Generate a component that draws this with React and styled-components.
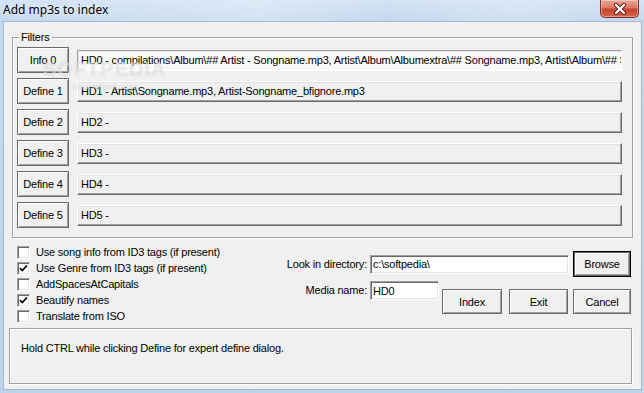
import React from 'react';
import styled, { createGlobalStyle } from 'styled-components';

const GlobalStyle = createGlobalStyle`
  html, body { margin:0; padding:0; background:#c4d8ee; }
  body { font-family:"Liberation Sans", Arial, sans-serif; font-size:11px; letter-spacing:-0.2px; color:#000; }
  * { box-sizing:border-box; }
`;

const Window = styled.div`
  position:relative;
  width:644px;
  height:393px;
  display:flex;
  flex-direction:column;
  padding:0 2px 3px 3px;
  background:linear-gradient(to bottom, #d3e3f4 0px, #c4d8ee 21px, #bdd3ec 100%);
  overflow:hidden;
`;

const TitleBar = styled.div`
  height:21px;
  flex:none;
  display:flex;
  align-items:center;
  justify-content:space-between;
  padding-right:3px;
  background:linear-gradient(100deg, rgba(255,255,255,0.0) 0%, rgba(255,255,255,0.25) 40%, rgba(255,255,255,0) 60%, rgba(255,255,255,0.2) 80%, rgba(255,255,255,0) 100%);
`;

const Title = styled.span`
  font-family:"Noto Sans", "Open Sans", sans-serif;
  font-size:12px;
  letter-spacing:0;
  color:#000;
  margin-bottom:2px;
  text-shadow:0 0 6px rgba(255,255,255,0.9);
`;

const CloseButton = styled.div`
  align-self:flex-start;
  width:39px;
  height:18px;
  border:1px solid #7a3024;
  border-top:none;
  border-radius:0 0 5px 5px;
  background:linear-gradient(to bottom, #e9a596 0%, #d97a66 45%, #c5432d 55%, #d5664f 100%);
  box-shadow:inset 0 0 0 1px rgba(255,255,255,0.35);
  display:flex;
  align-items:center;
  justify-content:center;
`;

const Client = styled.div`
  flex:1;
  display:flex;
  flex-direction:column;
  background:#f0f0f0;
  border:1px solid #a9b9cb;
  padding:9px 8px 5px 8px;
`;

const GroupBox = styled.fieldset`
  margin:0;
  padding:3px 10px 9px 4px;
  min-width:0;
  border:1px solid #a0a0a0;
  box-shadow:inset 1px 1px 0 #fff, 1px 1px 0 #fff;
`;

const Legend = styled.legend`
  padding:0 2px;
  margin-left:2px;
  line-height:13px;
  background:#f0f0f0;
`;

const Rows = styled.div`
  display:flex;
  flex-direction:column;
  gap:5px;
`;

const FilterRow = styled.div`
  display:flex;
  align-items:center;
  gap:8px;
  height:26px;
`;

const WinButton = styled.button`
  flex:none;
  width:${p => p.$w || 52}px;
  height:${p => p.$h || 26}px;
  margin-top:${p => p.$top || 0}px;
  padding:0;
  font-family:"Liberation Sans", Arial, sans-serif;
  font-size:11px;
  letter-spacing:-0.2px;
  color:#000;
  background:#f0f0f0;
  border:1px solid ${p => (p.$default ? '#000' : '#6a6a6a')};
  box-shadow:${p => (p.$default
    ? 'inset 0 0 0 1px #6a6a6a, inset 2px 2px 0 #fff, inset -2px -2px 0 #a0a0a0'
    : 'inset 1px 1px 0 #fff, inset -1px -1px 0 #a0a0a0')};
`;

const Field = styled.div`
  flex:1;
  min-width:0;
  height:21px;
  display:flex;
  align-items:center;
  padding:0 3px;
  white-space:nowrap;
  overflow:hidden;
  background:${p => (p.$edit ? '#f9f9f9' : '#f0f0f0')};
  border:1px solid;
  border-color:${p => (p.$edit ? '#a0a0a0 #fff #fff #a0a0a0' : '#fff #6a6a6a #6a6a6a #fff')};
  box-shadow:${p => (p.$edit ? 'inset 1px 1px 0 #e3e3e3' : 'inset -1px -1px 0 #a0a0a0, inset 1px 1px 0 #e3e3e3')};
`;

const Options = styled.div`
  height:90px;
  flex:none;
  display:flex;
  padding-top:6px;
`;

const CheckList = styled.div`
  display:flex;
  flex-direction:column;
  margin-left:5px;
`;

const CheckRow = styled.label`
  display:flex;
  align-items:center;
  gap:6px;
  height:16px;
`;

const Box = styled.span`
  width:13px;
  height:13px;
  flex:none;
  display:flex;
  align-items:center;
  justify-content:center;
  background:#fff;
  border:1px solid;
  border-color:#a0a0a0 #fff #fff #a0a0a0;
  box-shadow:inset 1px 1px 0 #6a6a6a, inset -1px -1px 0 #e3e3e3;
`;

const Controls = styled.div`
  margin-left:auto;
  margin-right:2px;
  margin-top:7px;
  display:flex;
  flex-direction:column;
  gap:4px;
`;

const ControlRow = styled.div`
  display:flex;
  align-items:${p => p.$align || 'center'};
`;

const Label = styled.span`
  width:90px;
  flex:none;
  text-align:right;
  margin-right:3px;
  line-height:19px;
`;

const TextBox = styled.div`
  width:${p => p.$w}px;
  height:19px;
  flex:none;
  display:flex;
  align-items:center;
  padding:0 2px;
  background:#fff;
  border:1px solid;
  border-color:#a0a0a0 #fff #fff #a0a0a0;
  box-shadow:inset 1px 1px 0 #6a6a6a, inset -1px -1px 0 #e3e3e3;
  margin-right:${p => p.$mr || 0}px;
`;

const StatusPanel = styled.div`
  height:56px;
  flex:none;
  margin:0 1px 0 -3px;
  padding:13px 0 0 11px;
  line-height:12px;
  border:1px solid #a0a0a0;
  box-shadow:inset 1px 1px 0 #fff, 1px 1px 0 #fff;
`;

const Watermark = styled.div`
  position:absolute;
  left:43px;
  top:58px;
  pointer-events:none;
  display:flex;
  flex-direction:column;
  align-items:center;
  color:rgba(255,255,255,0.5);
  text-shadow:0 0 1px rgba(90,90,90,0.25);
`;

const MarkBig = styled.span`
  font-family:"Liberation Sans", Arial, sans-serif;
  font-weight:bold;
  font-size:20px;
  letter-spacing:1px;
`;

const MarkSmall = styled.span`
  font-family:"Liberation Sans", Arial, sans-serif;
  font-size:8px;
  margin-top:1px;
`;

const Check = () => (
  <svg width="9" height="9" viewBox="0 0 9 9">
    <polyline points="1,4 3.3,6.5 8,1.5" fill="none" stroke="#000" strokeWidth="1.8" />
  </svg>
);

const CloseGlyph = () => (
  <svg width="14" height="12" viewBox="0 0 14 12">
    <path d="M3 2 L11 10 M11 2 L3 10" stroke="#5a1f16" strokeWidth="4" strokeLinecap="round" />
    <path d="M3 2 L11 10 M11 2 L3 10" stroke="#fff" strokeWidth="2.2" strokeLinecap="round" />
  </svg>
);

const filters = [
  { btn: 'Info 0', text: 'HD0 - compilations\\Album\\## Artist - Songname.mp3, Artist\\Album\\Albumextra\\## Songname.mp3, Artist\\Album\\## Songname.mp3', edit: true },
  { btn: 'Define 1', text: 'HD1 - Artist\\Songname.mp3, Artist-Songname_bfignore.mp3' },
  { btn: 'Define 2', text: 'HD2 -' },
  { btn: 'Define 3', text: 'HD3 -' },
  { btn: 'Define 4', text: 'HD4 -' },
  { btn: 'Define 5', text: 'HD5 -' },
];

const checks = [
  { label: 'Use song info from ID3 tags (if present)', on: false },
  { label: 'Use Genre from ID3 tags (if present)', on: true },
  { label: 'AddSpacesAtCapitals', on: false },
  { label: 'Beautify names', on: true },
  { label: 'Translate from ISO', on: false },
];

export default function App() {
  return (
    <>
      <GlobalStyle />
      <Window>
        <TitleBar>
          <Title>Add mp3s to index</Title>
          <CloseButton><CloseGlyph /></CloseButton>
        </TitleBar>
        <Client>
          <GroupBox>
            <Legend>Filters</Legend>
            <Rows>
              {filters.map(f => (
                <FilterRow key={f.btn}>
                  <WinButton>{f.btn}</WinButton>
                  <Field $edit={f.edit}>{f.text}</Field>
                </FilterRow>
              ))}
            </Rows>
          </GroupBox>
          <Options>
            <CheckList>
              {checks.map(c => (
                <CheckRow key={c.label}>
                  <Box>{c.on && <Check />}</Box>
                  {c.label}
                </CheckRow>
              ))}
            </CheckList>
            <Controls>
              <ControlRow>
                <Label>Look in directory:</Label>
                <TextBox $w={199} $mr={4}>{'c:\\softpedia\\'}</TextBox>
                <WinButton $w={58} $default>Browse</WinButton>
              </ControlRow>
              <ControlRow $align="flex-start">
                <Label>Media name:</Label>
                <TextBox $w={69} $mr={3}>HD0</TextBox>
                <WinButton $w={60} $h={25} $top={8}>Index</WinButton>
                <WinButton $w={59} $h={25} $top={8} style={{ marginLeft: 7 }}>Exit</WinButton>
                <WinButton $w={58} $h={25} $top={8} style={{ marginLeft: 5 }}>Cancel</WinButton>
              </ControlRow>
            </Controls>
          </Options>
          <StatusPanel>Hold CTRL while clicking Define for expert define dialog.</StatusPanel>
        </Client>
        <Watermark>
          <MarkBig>SOFTPEDIA</MarkBig>
          <MarkSmall>www.softpedia.com</MarkSmall>
        </Watermark>
      </Window>
    </>
  );
}
